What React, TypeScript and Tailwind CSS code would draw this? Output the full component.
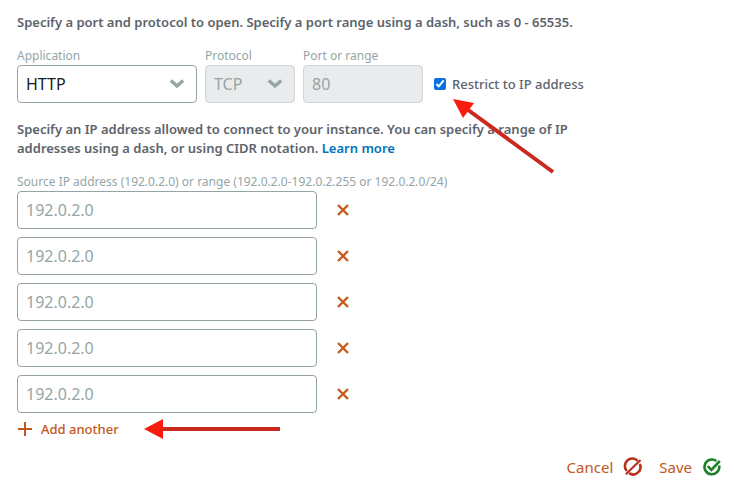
import { useState } from 'react';

function Chevron() {
  return (
    <svg
      className="pointer-events-none absolute right-3 top-3 h-3 w-4"
      viewBox="0 0 16 12"
      fill="none"
      stroke="#95a5a6"
      strokeWidth="3.4"
      aria-hidden="true"
    >
      <path d="M1.8 3.4 8 9 14.2 3.4" />
    </svg>
  );
}

function CancelIcon() {
  return (
    <svg className="h-5 w-5" viewBox="0 0 20 20" fill="none" stroke="#b7301c" strokeWidth="2.6" aria-hidden="true">
      <path d="M14.8 4A7.4 7.4 0 0 0 3.8 14" />
      <path d="M16.8 7a7.4 7.4 0 0 1-10.8 9.2" />
      <path d="M2.8 17.2 17.6 3" strokeWidth="2.2" />
    </svg>
  );
}

function SaveIcon() {
  return (
    <svg className="h-5 w-5" viewBox="0 0 20 20" fill="none" stroke="#1d8128" strokeWidth="2.6" aria-hidden="true">
      <path d="M14.4 4A7.4 7.4 0 1 0 17.2 8.6" />
      <path d="M5.8 9.2 9.4 12.8 17.8 4" />
    </svg>
  );
}

const labelClass = 'block text-xs leading-4 text-[#95a5a6]';

export default function App() {
  const [addresses, setAddresses] = useState(['', '', '', '', '']);
  const [restricted, setRestricted] = useState(true);

  const update = (index: number, value: string) =>
    setAddresses(addresses.map((a, i) => (i === index ? value : a)));

  const remove = (index: number) =>
    setAddresses(addresses.filter((_, i) => i !== index));

  return (
    <form
      className="min-h-screen bg-white pl-[17px] pr-3 pt-[13px] pb-2 font-['Noto_Sans',sans-serif] text-[13px] leading-[19px] text-[#5c636b]"
      onSubmit={(e) => e.preventDefault()}
    >
      <p className="font-semibold">
        Specify a port and protocol to open. Specify a port range using a dash, such as 0 - 65535.
      </p>

      <div className="mt-4 flex items-end gap-2">
        <div className="w-[180px]">
          <label htmlFor="application" className={labelClass}>
            Application
          </label>
          <div className="relative mt-px">
            <select
              id="application"
              className="h-[38px] w-full appearance-none rounded border border-[#95a5a6] bg-white px-2 text-base text-[#16191f]"
            >
              <option>HTTP</option>
              <option>HTTPS</option>
              <option>Custom</option>
            </select>
            <Chevron />
          </div>
        </div>
        <div className="w-[90px]">
          <label htmlFor="protocol" className={labelClass}>
            Protocol
          </label>
          <div className="relative mt-px">
            <select
              id="protocol"
              disabled
              className="h-[38px] w-full appearance-none rounded border border-[#d0d5d8] bg-[#e9ebed] px-2 text-base text-[#95a5a6] opacity-100"
            >
              <option>TCP</option>
            </select>
            <Chevron />
          </div>
        </div>
        <div className="w-[120px]">
          <label htmlFor="port" className={labelClass}>
            Port or range
          </label>
          <input
            id="port"
            disabled
            defaultValue="80"
            className="mt-px block h-[38px] w-full rounded border border-[#d0d5d8] bg-[#e9ebed] px-2 text-base text-[#95a5a6]"
          />
        </div>
        <div className="relative ml-[3px] flex h-[38px] items-center">
          <label className="flex items-center gap-1.5 font-medium">
            <input
              type="checkbox"
              checked={restricted}
              onChange={(e) => setRestricted(e.target.checked)}
              className="h-3 w-3 accent-[#0b6fe4]"
            />
            Restrict to IP address
          </label>
          <svg
            className="pointer-events-none absolute left-4 top-8 h-20 w-[108px]"
            viewBox="0 0 108 80"
            aria-hidden="true"
          >
            <path d="M14 10 103 75" stroke="#c9291f" strokeWidth="4" />
            <path d="M3 2 24 6 13 21Z" fill="#fb1b0e" />
          </svg>
        </div>
      </div>

      <p className="mt-[17px] max-w-[584px] font-semibold">
        Specify an IP address allowed to connect to your instance. You can specify a range of IP
        addresses using a dash, or using CIDR notation.{' '}
        <a href="#learn-more" className="text-[#0073bb]">
          Learn more
        </a>
      </p>

      <fieldset className="mt-4">
        <legend className={labelClass}>
          Source IP address (192.0.2.0) or range (192.0.2.0-192.0.2.255 or 192.0.2.0/24)
        </legend>
        <div className="mt-px flex flex-col gap-2">
          {addresses.map((address, i) => (
            <div key={i} className="flex items-center gap-4">
              <input
                aria-label={`Source IP address ${i + 1}`}
                placeholder="192.0.2.0"
                value={address}
                onChange={(e) => update(i, e.target.value)}
                className="h-[38px] w-[300px] rounded border border-[#95a5a6] px-2 text-base text-[#16191f] placeholder:text-[#95a5a6]"
              />
              <button type="button" aria-label="Remove address" className="p-1" onClick={() => remove(i)}>
                <svg className="h-3 w-3" viewBox="0 0 12 12" stroke="#c75b1c" strokeWidth="2.4" aria-hidden="true">
                  <path d="M1 1 11 11M11 1 1 11" />
                </svg>
              </button>
            </div>
          ))}
        </div>
      </fieldset>

      <div className="mt-1.5 flex items-center gap-6">
        <button
          type="button"
          className="flex items-center gap-2 font-medium text-[#c2571d]"
          onClick={() => setAddresses([...addresses, ''])}
        >
          <svg className="h-4 w-4" viewBox="0 0 16 16" stroke="#c2571d" strokeWidth="2" aria-hidden="true">
            <path d="M8 1V15M1 8H15" />
          </svg>
          Add another
        </button>
        <svg className="h-5 w-[138px]" viewBox="0 0 138 20" aria-hidden="true">
          <path d="M14 10H137" stroke="#c9291f" strokeWidth="4" />
          <path d="M1 10 20 0V20Z" fill="#fb1b0e" />
        </svg>
      </div>

      <div className="mt-[18px] flex justify-end gap-4 text-[15px] leading-5 text-[#c2571d]">
        <button type="button" className="flex items-center gap-2.5">
          Cancel
          <CancelIcon />
        </button>
        <button type="submit" className="flex items-center gap-2.5">
          Save
          <SaveIcon />
        </button>
      </div>
    </form>
  );
}
